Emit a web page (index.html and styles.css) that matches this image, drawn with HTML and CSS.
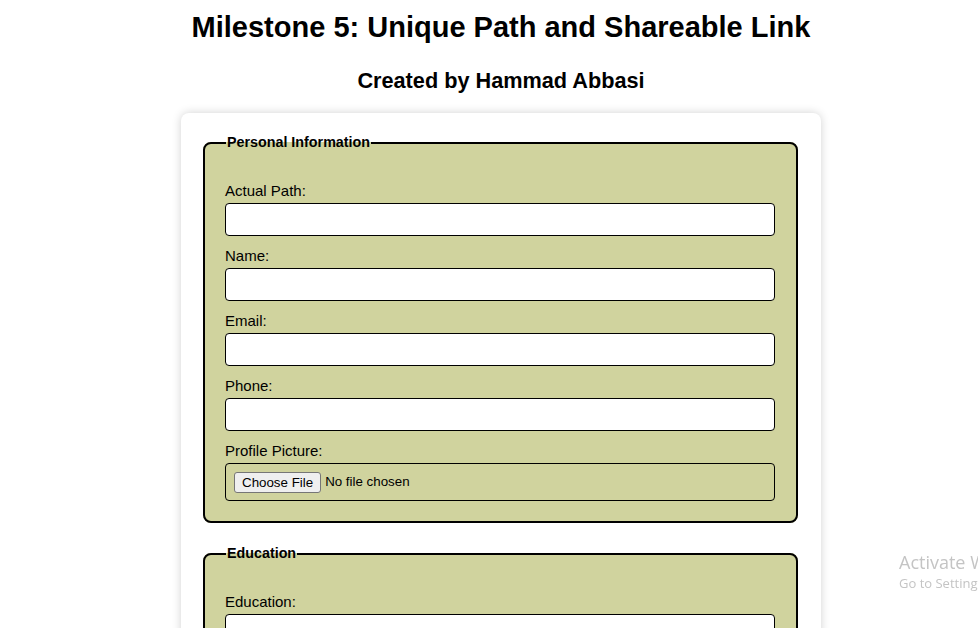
FILE: index.html
```html
<!DOCTYPE html>
<html lang="en">
<head>
<meta charset="utf-8">
<title>Resume Builder</title>
<link rel="stylesheet" href="styles.css">
</head>
<body>
<header class="page-header">
  <h1 class="title">Milestone 5: Unique Path and Shareable Link</h1>
  <h2 class="subtitle">Created by Hammad Abbasi</h2>
</header>
<main class="card">
  <form class="form">
    <fieldset class="group">
      <legend class="group-title">Personal Information</legend>
      <label class="field-label" for="path">Actual Path:</label>
      <input class="text-input" id="path" type="text">
      <label class="field-label" for="name">Name:</label>
      <input class="text-input" id="name" type="text">
      <label class="field-label" for="email">Email:</label>
      <input class="text-input" id="email" type="email">
      <label class="field-label" for="phone">Phone:</label>
      <input class="text-input" id="phone" type="tel">
      <label class="field-label" for="pic">Profile Picture:</label>
      <div class="file-box">
        <span class="file-btn">Choose File</span>
        <span class="file-name">No file chosen</span>
      </div>
    </fieldset>
    <fieldset class="group">
      <legend class="group-title">Education</legend>
      <label class="field-label" for="edu">Education:</label>
      <input class="text-input" id="edu" type="text">
      <label class="field-label" for="inst">Institution:</label>
      <input class="text-input" id="inst" type="text">
    </fieldset>
  </form>
</main>
<div class="watermark">
  <div class="wm-title">Activate Windows</div>
  <div class="wm-sub">Go to Settings to activate Windows.</div>
</div>
</body>
</html>
```
FILE: styles.css
```css
html, body {
  margin: 0;
  padding: 0;
  background: #ffffff;
  overflow: hidden;
}
body {
  font-family: "Liberation Sans", Arial, sans-serif;
  color: #000;
  padding-left: 24px;
}
.page-header {
  text-align: center;
}
.title {
  font-weight: bold;
  font-size: 29px;
  line-height: 36px;
  margin: 9px 0 0;
}
.subtitle {
  font-weight: bold;
  font-size: 21.7px;
  line-height: 28px;
  margin: 22px 0 0;
}
.card {
  width: 640px;
  margin: 18px auto 0;
  background: #fff;
  border-radius: 8px;
  box-shadow: 0 0 10px rgba(0, 0, 0, 0.18);
  box-sizing: border-box;
  padding: 21px 23px 20px 22px;
}
.form {
  display: flex;
  flex-direction: column;
  gap: 22px;
}
.group {
  margin: 0;
  border: 2px solid #000;
  border-radius: 8px;
  background: #d0d39e;
  padding: 31px 21px 9px 20px;
  display: flex;
  flex-direction: column;
  min-width: 0;
}
.group-title {
  font-weight: bold;
  font-size: 14.3px;
  line-height: 17px;
  padding: 0 1px;
  margin-left: 1px;
}
.field-label {
  display: block;
  font-size: 15px;
  line-height: 17px;
  margin-bottom: 4px;
}
.text-input {
  display: block;
  height: 33px;
  box-sizing: border-box;
  border: 1px solid #000;
  border-radius: 4px;
  background: #fff;
  margin: 0 0 11px;
  padding: 0 8px;
  font: inherit;
}
.file-box {
  height: 38px;
  box-sizing: border-box;
  border: 1px solid #000;
  border-radius: 4px;
  display: flex;
  align-items: center;
  padding: 0 8px;
  margin-bottom: 11px;
  font-size: 13.33px;
}
.file-btn {
  display: inline-block;
  background: #efefef;
  border: 1px solid #767676;
  border-radius: 3px;
  padding: 2px 7px;
  line-height: 15px;
  margin-right: 4px;
}
.file-name {
  line-height: 16px;
}
.watermark {
  position: fixed;
  left: 899px;
  top: 550px;
  white-space: nowrap;
  color: #c4c4c4;
  font-family: "Open Sans", "Noto Sans", sans-serif;
}
.wm-title {
  font-size: 18px;
  line-height: 24px;
}
.wm-sub {
  font-size: 13px;
  line-height: 18px;
}
```
